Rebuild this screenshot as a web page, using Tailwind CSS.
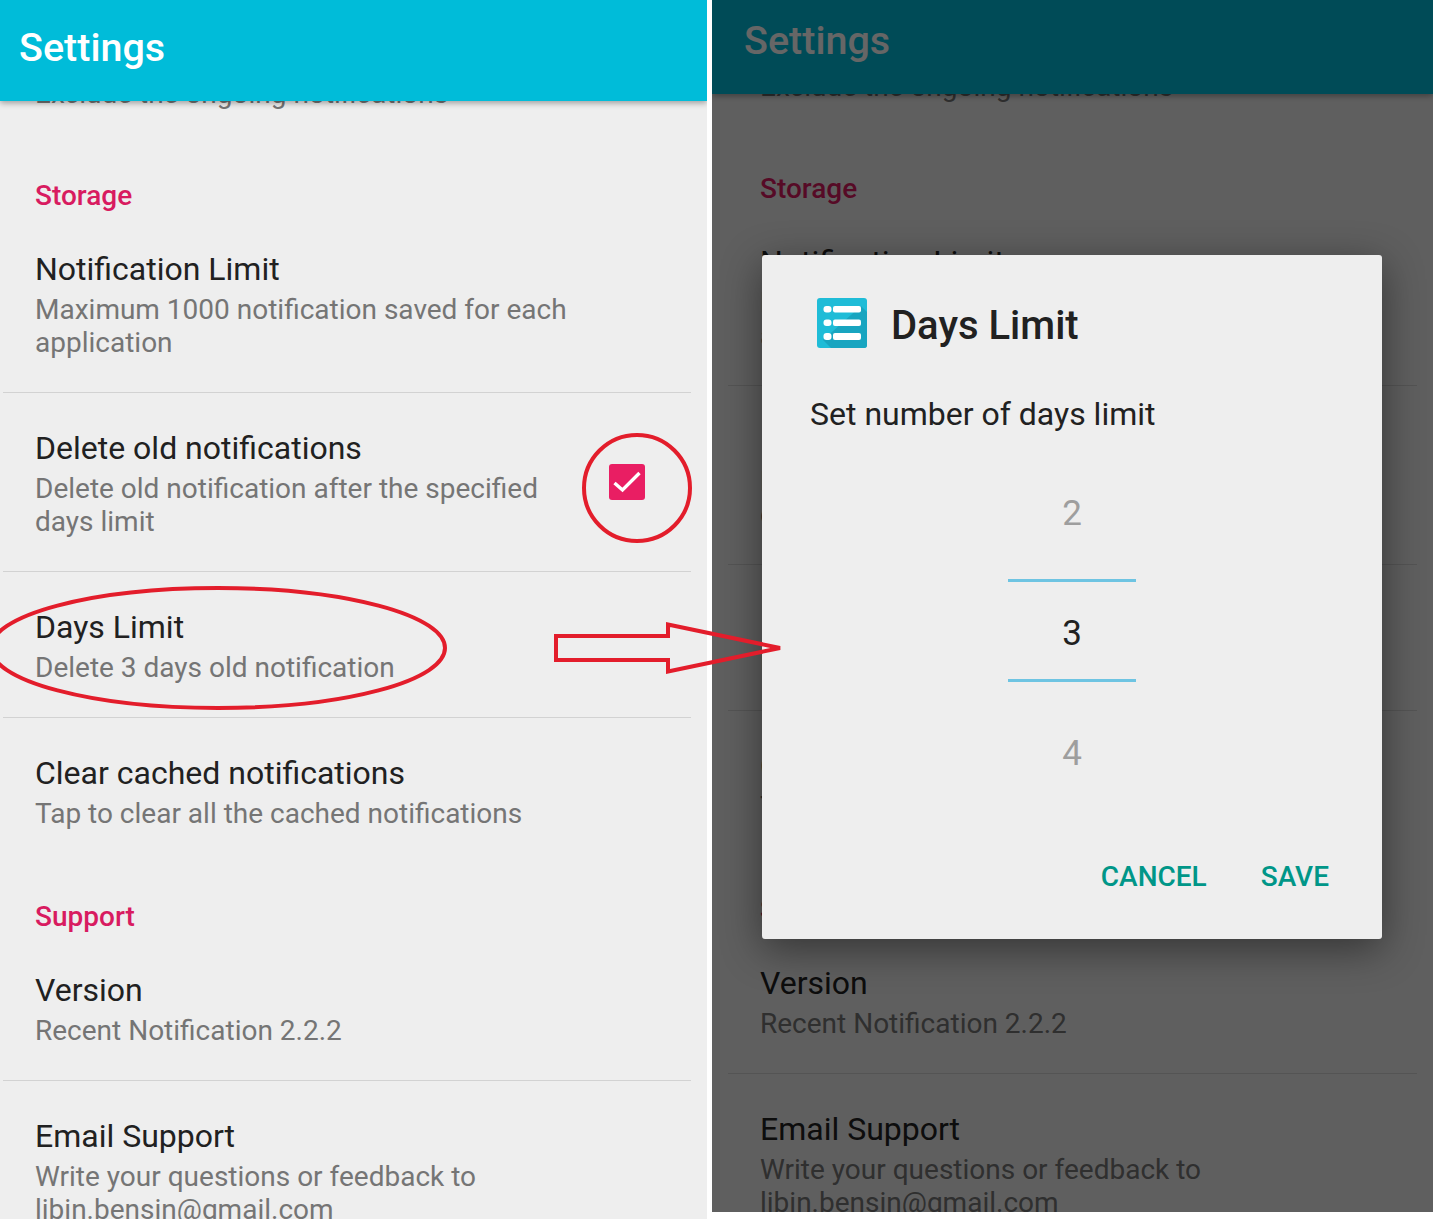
<!DOCTYPE html>
<html lang="en">
<head>
    <meta charset="UTF-8">
    <title>Settings - Days Limit</title>
    <script src="https://cdn.jsdelivr.net/npm/@tailwindcss/browser@4"></script>
</head>
<body class="bg-white font-[Roboto,sans-serif]">
<div class="relative flex w-[1433px] h-[1219px] overflow-hidden items-start">

    <!-- left screen -->
    <section class="w-[707px] h-[1219px] shrink-0 overflow-hidden bg-[#eeeeee]">
        <header class="relative z-10 h-[101px] bg-[#00bcd9] pl-[19px] pt-[25px] shadow-[0_2px_6px_rgba(0,0,0,0.35)]">
            <h1 class="text-[39.5px] leading-[46px] font-medium text-white">Settings</h1>
        </header>
        <div class="-mt-[24px] pl-[3px] pr-[16px]">
            <p class="pl-[32px] pb-[68px] text-[28px] leading-[33px] text-[#757575]">Exclude the ongoing notifications</p>
            <h2 class="pl-[32px] h-[36px] text-[28px] leading-[36px] font-medium text-[#d81b60]">Storage</h2>
            <div class="pl-[32px] pt-[35px] pb-[33px] border-b border-[#d2d2d2]">
                <h3 class="text-[32px] leading-[40px] text-[#212121]">Notification Limit</h3>
                <p class="mt-[4px] text-[28px] leading-[33px] text-[#757575]">Maximum 1000 notification saved for each<br>application</p>
            </div>
            <div class="flex items-start justify-between pl-[32px] pt-[35px] pb-[33px] border-b border-[#d2d2d2]">
                <div>
                    <h3 class="text-[32px] leading-[40px] text-[#212121]">Delete old notifications</h3>
                    <p class="mt-[4px] text-[28px] leading-[33px] text-[#757575]">Delete old notification after the specified<br>days limit</p>
                </div>
                <span class="mt-[36px] mr-[46px] flex h-[36px] w-[36px] items-center justify-center rounded-[3px] bg-[#e91e63]">
                    <svg class="h-[26px] w-[28px]" viewBox="0 0 28 26" fill="none" stroke="#ffffff" stroke-width="3.4"><path d="M1.5 14l8 7L26.5 4"/></svg>
                </span>
            </div>
            <div class="pl-[32px] pt-[35px] pb-[33px] border-b border-[#d2d2d2]">
                <h3 class="text-[32px] leading-[40px] text-[#212121]">Days Limit</h3>
                <p class="mt-[4px] text-[28px] leading-[33px] text-[#757575]">Delete 3 days old notification</p>
            </div>
            <div class="pl-[32px] pt-[35px] pb-[33px]">
                <h3 class="text-[32px] leading-[40px] text-[#212121]">Clear cached notifications</h3>
                <p class="mt-[4px] text-[28px] leading-[33px] text-[#757575]">Tap to clear all the cached notifications</p>
            </div>
            <h2 class="mt-[36px] pl-[32px] h-[36px] text-[28px] leading-[36px] font-medium text-[#d81b60]">Support</h2>
            <div class="pl-[32px] pt-[35px] pb-[33px] border-b border-[#d2d2d2]">
                <h3 class="text-[32px] leading-[40px] text-[#212121]">Version</h3>
                <p class="mt-[4px] text-[28px] leading-[33px] text-[#757575]">Recent Notification 2.2.2</p>
            </div>
            <div class="pl-[32px] pt-[35px]">
                <h3 class="text-[32px] leading-[40px] text-[#212121]">Email Support</h3>
                <p class="mt-[4px] text-[28px] leading-[33px] text-[#757575]">Write your questions or feedback to<br>libin.bensin@gmail.com</p>
            </div>
        </div>
    </section>

    <div class="w-[5px] shrink-0"></div>

    <!-- right screen, dimmed behind the dialog -->
    <section class="relative w-[721px] h-[1212px] shrink-0 overflow-hidden bg-[#eeeeee]">
        <header class="relative z-10 h-[94px] bg-[#00bcd9] pl-[32px] pt-[18px] shadow-[0_2px_6px_rgba(0,0,0,0.35)]">
            <h1 class="text-[39.5px] leading-[46px] font-medium text-white">Settings</h1>
        </header>
        <div class="-mt-[24px] pl-[16px] pr-[16px]">
            <p class="pl-[32px] pb-[68px] text-[28px] leading-[33px] text-[#757575]">Exclude the ongoing notifications</p>
            <h2 class="pl-[32px] h-[36px] text-[28px] leading-[36px] font-medium text-[#d81b60]">Storage</h2>
            <div class="pl-[32px] pt-[35px] pb-[33px] border-b border-[#d2d2d2]">
                <h3 class="text-[32px] leading-[40px] text-[#212121]">Notification Limit</h3>
                <p class="mt-[4px] text-[28px] leading-[33px] text-[#757575]">Maximum 1000 notification saved for each<br>application</p>
            </div>
            <div class="pl-[32px] pt-[35px] pb-[33px] border-b border-[#d2d2d2]">
                <h3 class="text-[32px] leading-[40px] text-[#212121]">Delete old notifications</h3>
                <p class="mt-[4px] text-[28px] leading-[33px] text-[#757575]">Delete old notification after the specified<br>days limit</p>
            </div>
            <div class="pl-[32px] pt-[35px] pb-[33px] border-b border-[#d2d2d2]">
                <h3 class="text-[32px] leading-[40px] text-[#212121]">Days Limit</h3>
                <p class="mt-[4px] text-[28px] leading-[33px] text-[#757575]">Delete 3 days old notification</p>
            </div>
            <div class="pl-[32px] pt-[35px] pb-[33px]">
                <h3 class="text-[32px] leading-[40px] text-[#212121]">Clear cached notifications</h3>
                <p class="mt-[4px] text-[28px] leading-[33px] text-[#757575]">Tap to clear all the cached notifications</p>
            </div>
            <h2 class="mt-[36px] pl-[32px] h-[36px] text-[28px] leading-[36px] font-medium text-[#d81b60]">Support</h2>
            <div class="pl-[32px] pt-[35px] pb-[33px] border-b border-[#d2d2d2]">
                <h3 class="text-[32px] leading-[40px] text-[#212121]">Version</h3>
                <p class="mt-[4px] text-[28px] leading-[33px] text-[#757575]">Recent Notification 2.2.2</p>
            </div>
            <div class="pl-[32px] pt-[35px]">
                <h3 class="text-[32px] leading-[40px] text-[#212121]">Email Support</h3>
                <p class="mt-[4px] text-[28px] leading-[33px] text-[#757575]">Write your questions or feedback to<br>libin.bensin@gmail.com</p>
            </div>
        </div>

        <div class="absolute inset-0 z-20 bg-black/60"></div>

        <div class="absolute left-[50px] top-[255px] z-30 w-[620px] h-[684px] rounded-[3px] bg-[#eeeeee] shadow-[0_10px_40px_rgba(0,0,0,0.45)]">
            <div class="flex items-start pl-[55px] pt-[43px]">
                <svg class="h-[50px] w-[50px]" viewBox="0 0 50 50">
                    <rect width="50" height="50" rx="3" fill="#1fbcd7"/>
                    <path d="M44 8L50 14V47a3 3 0 0 1-3 3H14L6 42z" fill="#18a5c0"/>
                    <g fill="#ffffff">
                        <rect x="6.5" y="8" width="8" height="6.5" rx="3"/>
                        <rect x="16" y="8" width="28" height="6.5" rx="2"/>
                        <rect x="6.5" y="21.5" width="8" height="6.5" rx="3"/>
                        <rect x="16" y="21.5" width="28" height="6.5" rx="2"/>
                        <rect x="6.5" y="35" width="8" height="7" rx="3"/>
                        <rect x="16" y="35" width="28" height="7" rx="2"/>
                    </g>
                </svg>
                <h2 class="ml-[24px] mt-[3px] text-[40px] leading-[50px] font-medium text-[#212121]">Days Limit</h2>
            </div>
            <p class="mt-[43px] pl-[48px] text-[32px] leading-[40px] text-[#212121]">Set number of days limit</p>
            <div class="mt-[40px] mx-auto w-[128px] text-center text-[35px] leading-[40px]">
                <div class="pt-[20px] h-[105px] text-[#9e9e9e]">2</div>
                <div class="h-[103px] border-y-[3px] border-[#6ec4e2] pt-[32px] text-[#212121]">3</div>
                <div class="pt-[52px] h-[110px] text-[#9e9e9e]">4</div>
            </div>
            <div class="mt-[67px] flex justify-end gap-[54px] pr-[53px] text-[28px] leading-[36px] font-medium text-[#009688]">
                <button>CANCEL</button>
                <button>SAVE</button>
            </div>
        </div>
    </section>

    <!-- red annotations drawn over both screens -->
    <svg class="absolute left-0 top-0 z-40 pointer-events-none" width="1433" height="1219" viewBox="0 0 1433 1219" fill="none" stroke="#e31d2b" stroke-width="4">
        <circle cx="637" cy="488" r="53"/>
        <ellipse cx="218" cy="648" rx="227" ry="60"/>
        <path d="M556 636H668V624.5L780 648 668 671.5V660H556Z"/>
    </svg>
</div>
</body>
</html>
